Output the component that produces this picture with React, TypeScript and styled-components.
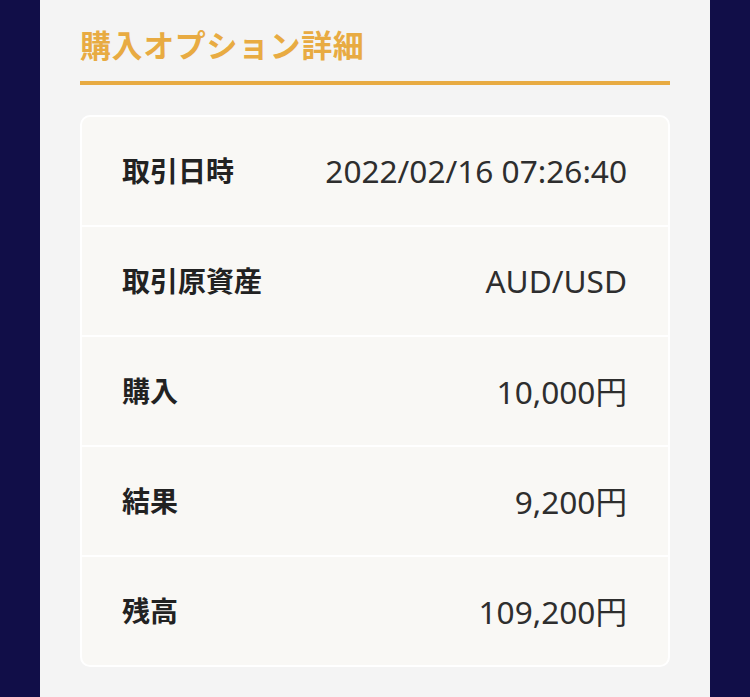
import React from "react";
import styled, { createGlobalStyle } from "styled-components";

const Global = createGlobalStyle`
  html, body { margin: 0; padding: 0; background: #110e48; }
  body { font-family: "Noto Sans CJK JP", "Noto Sans", sans-serif; }
`;

const Page = styled.div`
  height: 697px;
  display: flex;
  justify-content: center;
  background: #110e48;
  overflow: hidden;
`;

const Panel = styled.main`
  width: 670px;
  background: #f4f4f4;
  padding: 22px 40px 0;
  box-sizing: border-box;
  display: flex;
  flex-direction: column;
`;

const Title = styled.h2`
  margin: 0;
  font-size: 31px;
  font-weight: 700;
  color: #e8ab42;
  line-height: 44px;
  padding-bottom: 15px;
  border-bottom: 4px solid #e8ab42;
  letter-spacing: 0.6px;
`;

const Card = styled.div`
  margin-top: 30px;
  background: #f9f8f5;
  border: 2px solid #ffffff;
  border-radius: 10px;
  display: flex;
  flex-direction: column;
`;

const Row = styled.div<{ $last?: boolean }>`
  height: 106px;
  display: flex;
  align-items: center;
  justify-content: space-between;
  padding: 0 41px 2px 40px;
  border-bottom: ${(p) => (p.$last ? "none" : "2px solid #ffffff")};
`;

const Label = styled.span`
  font-size: 28px;
  font-weight: 700;
  color: #222222;
`;

const Value = styled.span`
  font-family: "Noto Sans", "Noto Sans CJK JP", sans-serif;
  font-size: 31.6px;
  font-weight: 400;
  color: #2e2e2e;
`;

const rows = [
  ["取引日時", "2022/02/16 07:26:40"],
  ["取引原資産", "AUD/USD"],
  ["購入", "10,000円"],
  ["結果", "9,200円"],
  ["残高", "109,200円"],
];

export default function App() {
  return (
    <Page>
      <Global />
      <Panel>
        <Title>購入オプション詳細</Title>
        <Card>
          {rows.map(([k, v], i) => (
            <Row key={k} $last={i === rows.length - 1}>
              <Label>{k}</Label>
              <Value>{v}</Value>
            </Row>
          ))}
        </Card>
      </Panel>
    </Page>
  );
}
